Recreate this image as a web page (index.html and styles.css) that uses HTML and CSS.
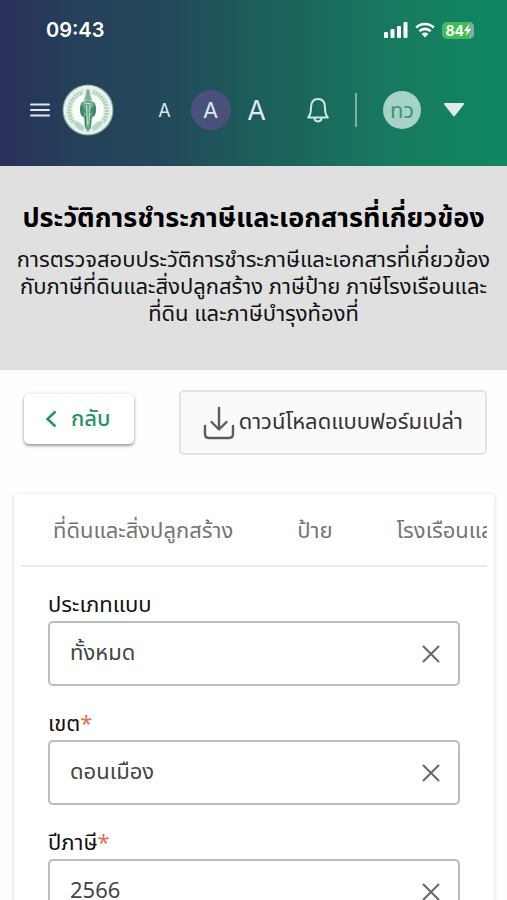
FILE: index.html
```
<!DOCTYPE html>
<html lang="th">
<head>
    <meta charset="UTF-8">
    <meta name="viewport" content="width=device-width, initial-scale=1.0">
    <title>ประวัติการชำระภาษีและเอกสารที่เกี่ยวข้อง</title>
    <link rel="stylesheet" href="styles.css">
</head>
<body>
    <header class="header">
        <div class="status-bar">
            <span class="clock">09:43</span>
            <div class="status-icons">
                <svg width="24" height="16" viewBox="0 0 24 16" fill="#fff" aria-hidden="true">
                    <rect x="0" y="10" width="4" height="6" rx="1"/>
                    <rect x="6.5" y="7" width="4" height="9" rx="1"/>
                    <rect x="13" y="4" width="4" height="12" rx="1"/>
                    <rect x="19.5" y="0" width="4" height="16" rx="1"/>
                </svg>
                <svg width="20" height="16" viewBox="0 0 20 16" aria-hidden="true">
                    <path d="M1.2 5.6a12.6 12.6 0 0 1 17.6 0M4.4 9.1a8 8 0 0 1 11.2 0" fill="none" stroke="#fff" stroke-width="2.7"/>
                    <path d="M10 15.4 6.6 11.9a4.9 4.9 0 0 1 6.8 0z" fill="#fff"/>
                </svg>
                <span class="battery">84<svg width="7" height="12" viewBox="0 0 7 12" aria-hidden="true"><path d="M5 0 0 7h3L2 12l5-7H4z" fill="#fff"/></svg></span>
            </div>
        </div>

        <nav class="nav">
            <div class="brand">
                <button class="icon-btn" aria-label="เมนู">
                    <svg width="20" height="14" viewBox="0 0 20 14" stroke="#dce8ee" stroke-width="2" stroke-linecap="round"><path d="M1 1.5h18M1 7h18M1 12.5h18"/></svg>
                </button>
                <a href="#" aria-label="หน้าแรก">
                    <svg class="logo" width="52" height="52" viewBox="0 0 52 52">
                        <circle cx="26" cy="26" r="25.5" fill="#83ad9f"/>
                        <circle cx="26" cy="26" r="23.8" fill="#e4f1e9" stroke="#f5fbf6"/>
                        <path d="M11 38A19.5 19.5 0 0 1 21 8M31 8a19.5 19.5 0 0 1 10 30" fill="none" stroke="#b0cdbf" stroke-width="4" stroke-dasharray="2 1"/>
                        <circle cx="26" cy="26" r="15.5" fill="#f8fdf9"/>
                        <path d="M11 38q4-2 7 1l4 4-1 4q-7-2-10-9zM41 38q-4-2-7 1l-4 4 1 4q7-2 10-9z" fill="#b9d5c6"/>
                        <path d="M24.5 6q1.5-2 3 0l.5 4 2 6h-8l2-6z" fill="#7fb197"/>
                        <path d="M19 19q7-6 14 0l1 6-1 6-3 3-1 10-3 4-3-4-1-10-3-3-1-6z" fill="#6ba88b"/>
                        <path d="M19 20q-2 6 0 11l3 2v-9zM33 20q2 6 0 11l-3 2v-9z" fill="#43876b"/>
                        <path d="M24.5 21l1 20M28 21l-1 20M22 19l8 1" stroke="#c3dfd0" fill="none"/>
                        <path d="M23.5 31v11M29 31l-1 11M22 25l2 4M30 25l-2 4" stroke="#3a7f63" fill="none"/>
                    </svg>
                </a>
            </div>
            <div class="text-size">
                <button class="size-btn small">A</button>
                <button class="size-btn medium active">A</button>
                <button class="size-btn large">A</button>
            </div>
            <div class="account">
                <button class="icon-btn" aria-label="การแจ้งเตือน">
                    <svg width="22" height="26" viewBox="0 0 22 26" fill="none" stroke="#cfe8e0" stroke-width="2" stroke-linejoin="round"><path d="M1.2 20.5C3 18.5 4 16 4 10.5 4 5 6.5 2 11 2s7 3 7 8.500c0 5.500 1 8 2.800 10z"/><path d="M7.500 21c0 4.500 7 4.500 7 0"/></svg>
                </button>
                <span class="divider"></span>
                <button class="avatar">ทว</button>
                <button class="icon-btn" aria-label="บัญชีผู้ใช้">
                    <svg width="22" height="14" viewBox="0 0 22 14"><path d="M2 1h18L11 12.5z" fill="#dceee6" stroke="#dceee6" stroke-width="2" stroke-linejoin="round"/></svg>
                </button>
            </div>
        </nav>
    </header>

    <section class="intro">
        <h1>ประวัติการชำระภาษีและเอกสารที่เกี่ยวข้อง</h1>
        <p>การตรวจสอบประวัติการชำระภาษีและเอกสารที่เกี่ยวข้องกับภาษีที่ดินและสิ่งปลูกสร้าง ภาษีป้าย ภาษีโรงเรือนและที่ดิน และภาษีบำรุงท้องที่</p>
    </section>

    <main>
        <div class="actions">
            <button class="back-btn">
                <svg width="12" height="18" viewBox="0 0 12 18" fill="none" stroke="#259468" stroke-width="2.5"><path d="M10.5 1.5 2.5 9l8 7.5"/></svg>
                กลับ
            </button>
            <button class="download-btn">
                <svg width="32" height="34" viewBox="0 0 32 34" fill="none" stroke="#5c5c5c" stroke-width="2.4" stroke-linecap="round" stroke-linejoin="round"><path d="M16 2v21M8.5 16l7.5 7.5 7.5-7.5M2 20v8q0 4 4 4h20q4 0 4-4v-8"/></svg>
                ดาวน์โหลดแบบฟอร์มเปล่า
            </button>
        </div>

        <div class="card">
            <div class="tabs">
                <button class="tab">ที่ดินและสิ่งปลูกสร้าง</button>
                <button class="tab">ป้าย</button>
                <button class="tab">โรงเรือนและที่ดิน</button>
            </div>
            <form class="filters">
                <label for="formType">ประเภทแบบ</label>
                <div class="field">
                    <input type="text" id="formType" value="ทั้งหมด">
                    <button type="button" class="clear" aria-label="ล้าง"><svg width="18" height="18" viewBox="0 0 18 18" stroke="#686868" stroke-width="2" stroke-linecap="round"><path d="M1.5 1.5l15 15M16.5 1.5l-15 15"/></svg></button>
                </div>

                <label for="district">เขต<span class="required">*</span></label>
                <div class="field">
                    <input type="text" id="district" value="ดอนเมือง">
                    <button type="button" class="clear" aria-label="ล้าง"><svg width="18" height="18" viewBox="0 0 18 18" stroke="#686868" stroke-width="2" stroke-linecap="round"><path d="M1.5 1.5l15 15M16.5 1.5l-15 15"/></svg></button>
                </div>

                <label for="taxYear">ปีภาษี<span class="required">*</span></label>
                <div class="field">
                    <input type="text" id="taxYear" value="2566">
                    <button type="button" class="clear" aria-label="ล้าง"><svg width="18" height="18" viewBox="0 0 18 18" stroke="#686868" stroke-width="2" stroke-linecap="round"><path d="M1.5 1.5l15 15M16.5 1.5l-15 15"/></svg></button>
                </div>
            </form>
        </div>
    </main>
</body>
</html>
```

FILE: styles.css
```
* {
    box-sizing: border-box;
}
html {
    scrollbar-width: none;
}
body {
    margin: 0;
    background: #fefefe;
    color: #111;
    font-family: "Noto Sans Thai", "Noto Sans", sans-serif;
    font-size: 22px;
}
button,
input {
    font: inherit;
    color: inherit;
    border: none;
    background: none;
    padding: 0;
}
button {
    cursor: pointer;
}
svg {
    display: block;
}
.header {
    height: 166px;
    background: linear-gradient(90deg, #292f59 0%, #26405a 15%, #224b5a 35%, #1d5b5a 48%, #1b695c 62%, #177a60 78%, #0f8862 100%);
}
.status-bar {
    display: flex;
    align-items: center;
    justify-content: space-between;
    height: 60px;
    padding: 0 33px 0 46px;
    color: #fff;
}
.clock {
    font-family: Inter, sans-serif;
    font-size: 20px;
    font-weight: 600;
}
.status-icons {
    display: flex;
    align-items: center;
    gap: 7px;
}
.battery {
    display: flex;
    align-items: center;
    height: 17px;
    padding: 0 3px;
    border-radius: 5px;
    background: linear-gradient(90deg, #41bd56 84%, #7fae9a 84%);
    font-family: Inter, sans-serif;
    font-size: 14px;
    font-weight: 700;
}
.nav {
    display: flex;
    align-items: center;
    justify-content: space-between;
    height: 100px;
    padding: 0 42px 0 30px;
}
.brand {
    display: flex;
    align-items: center;
    gap: 12px;
}
.text-size {
    display: flex;
    align-items: center;
    gap: 6px;
    color: #dceaf0;
    font-family: Inter, sans-serif;
}
.size-btn {
    width: 40px;
    height: 40px;
    border-radius: 50%;
}
.small {
    font-size: 18px;
}
.medium {
    font-size: 22px;
}
.large {
    font-size: 27px;
}
.active {
    background: #49507a;
}
.account {
    display: flex;
    align-items: center;
    gap: 22px;
}
.divider {
    width: 2px;
    height: 34px;
    margin: 0 4px;
    background: #7fb0a2;
}
.avatar {
    width: 38px;
    height: 38px;
    border-radius: 50%;
    background: #a6d3c6;
    color: #36957a;
    line-height: 42px;
}
.intro {
    padding: 33px 12px 42px;
    background: #e0e0e0;
    text-align: center;
}
.intro h1 {
    margin: 0 0 8px;
    font-size: 27px;
    line-height: 40px;
    color: #000;
}
.intro p {
    margin: 0;
    line-height: 27px;
}
.actions {
    display: flex;
    justify-content: space-between;
    padding: 20px 20px 39px 24px;
}
.back-btn {
    display: flex;
    align-items: center;
    gap: 14px;
    height: 50px;
    margin-top: 4px;
    padding: 0 23px 0 21px;
    border-radius: 5px;
    background: #fff;
    box-shadow: 0 2px 3px rgba(0, 0, 0, 0.35), 0 0 4px rgba(0, 0, 0, 0.12);
    color: #259468;
    font-weight: 500;
}
.download-btn {
    display: flex;
    align-items: center;
    gap: 4px;
    height: 65px;
    padding: 0 22px;
    border: 2px solid #e3e3e3;
    border-radius: 5px;
    background: #fafafa;
    color: #333;
}
.card {
    margin: 0 13px 0 14px;
    padding: 0 7px 40px;
    background: #fff;
    box-shadow: 0 1px 4px rgba(0, 0, 0, 0.18);
}
.tabs {
    display: flex;
    height: 73px;
    overflow: hidden;
    border-bottom: 2px solid #ececec;
    color: #757575;
}
.tab {
    flex: none;
    padding: 4px 32px 0;
    white-space: nowrap;
}
.filters {
    padding: 23px 27px 0;
}
.filters label {
    display: block;
    padding-top: 1px;
    line-height: 30px;
}
.required {
    color: #e0714c;
}
.field {
    display: flex;
    align-items: center;
    height: 65px;
    margin-bottom: 23px;
    padding: 0 18px 0 20px;
    border: 2px solid #bdbdbd;
    border-radius: 5px;
    color: #444;
}
.field input {
    flex: 1;
    min-width: 0;
    outline: none;
}
```
